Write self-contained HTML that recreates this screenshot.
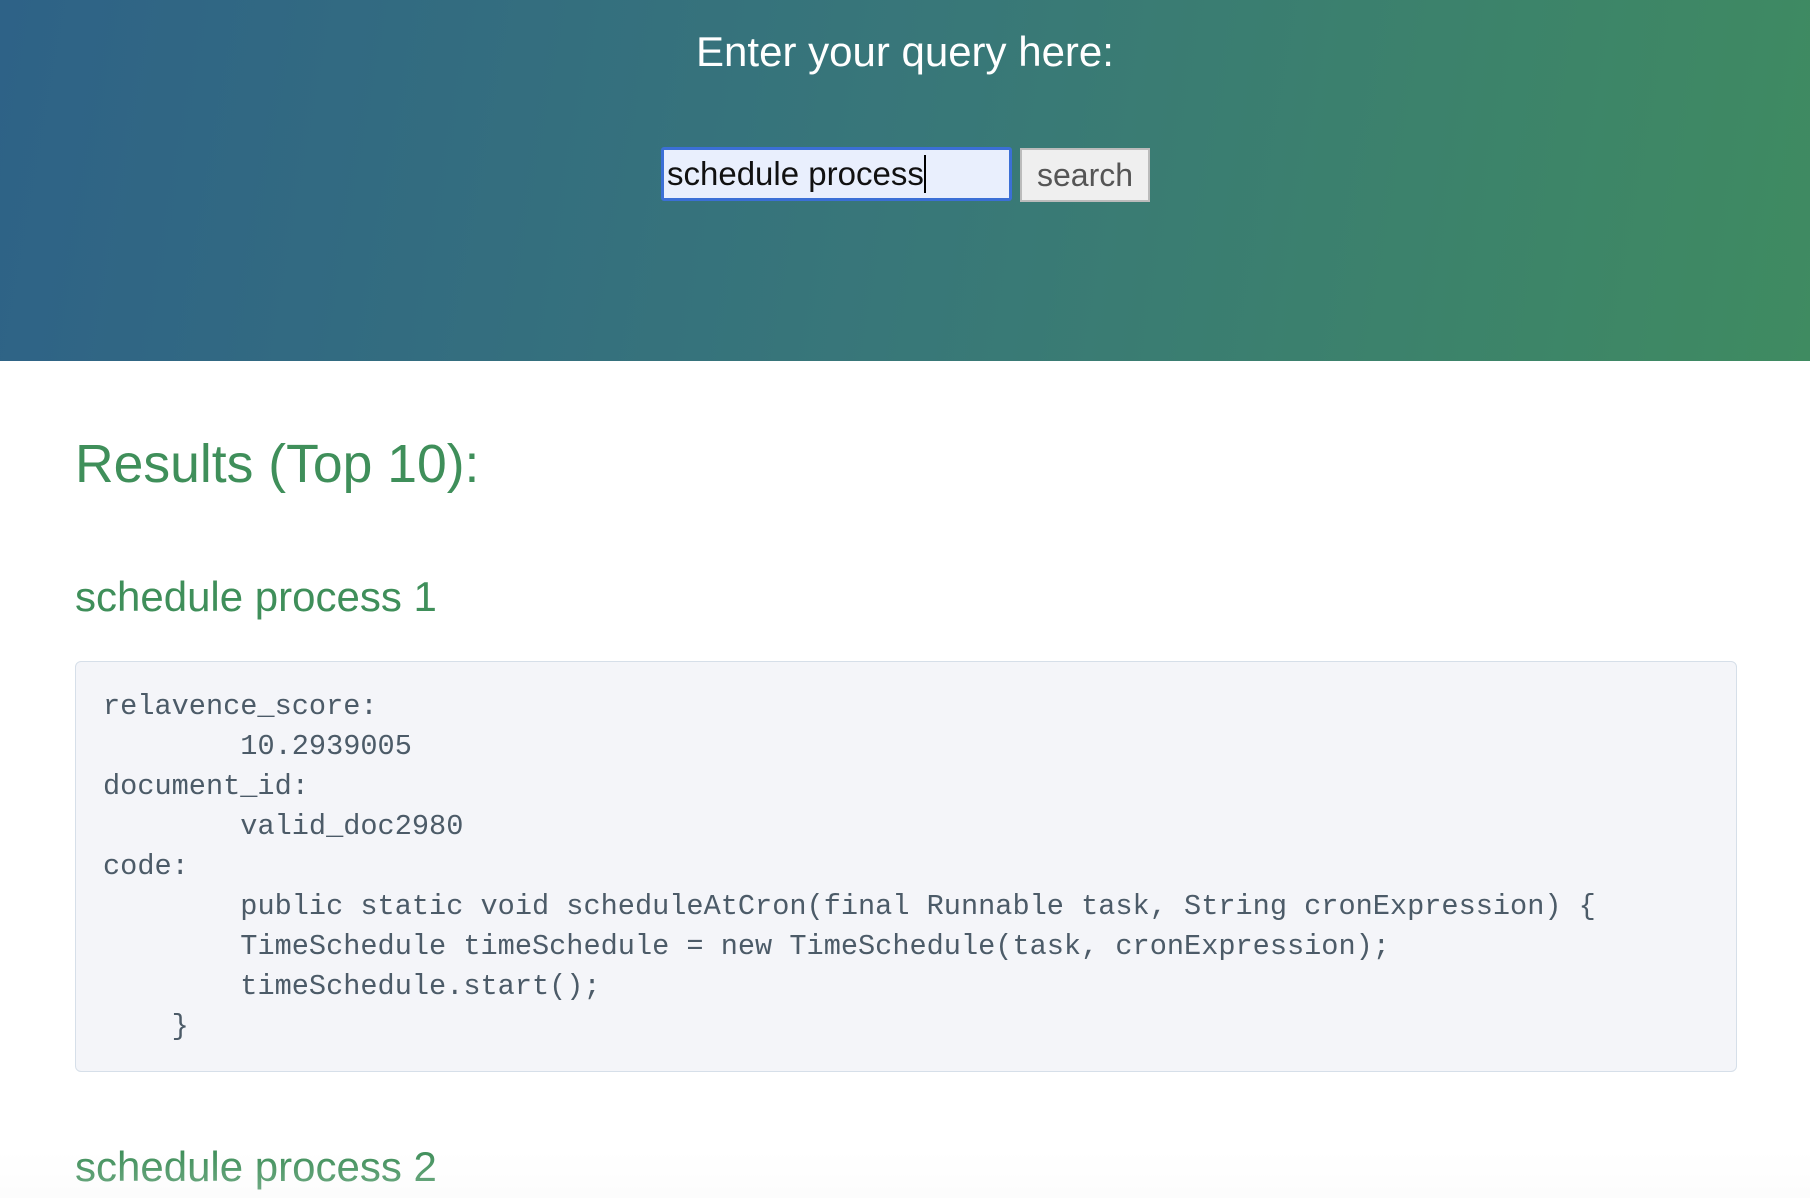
<!DOCTYPE html>
<html><head><meta charset="utf-8"><style>
html,body{margin:0;padding:0;width:1810px;height:1198px;overflow:hidden;background:#fff;font-family:"Liberation Sans",sans-serif}
.hdr{position:absolute;left:0;top:0;width:1810px;height:361px;background:linear-gradient(100deg,#2e6287 0%,#387779 50%,#3f8b61 100%)}
.t{position:absolute;top:28px;width:1810px;text-align:center;color:#fff;font-size:42px}
.inp{position:absolute;left:661px;top:147px;width:351px;height:54px;box-sizing:border-box;border:3px solid #3b6fd6;border-radius:3px;background:#e9effd;font-size:33px;line-height:48px;padding-left:3px;color:#111}
.inp span{display:inline-block;width:2px;height:38px;background:#000;vertical-align:-8px}
.btn{position:absolute;left:1020px;top:148px;width:130px;height:54px;box-sizing:border-box;border:2px solid #bbb;background:#efefef;color:#555;font-size:32px;text-align:center;line-height:50px}
h1{position:absolute;left:75px;top:434px;margin:0;font-weight:normal;color:#3f8f5a;font-size:53.5px}
h2{position:absolute;left:75px;margin:0;font-weight:normal;color:#3f8f5a;font-size:42px}
pre{position:absolute;left:75px;top:661px;width:1662px;height:411px;box-sizing:border-box;margin:0;border:1.5px solid #d6dfe9;border-radius:6px;background:#f4f5f9;color:#4c5b68;font-family:"Liberation Mono",monospace;font-size:28.6px;line-height:40px;padding:25px 0 0 27px;tab-size:8}
.fade{position:absolute;left:0;top:1150px;width:1810px;height:48px;background:linear-gradient(rgba(255,255,255,0),rgba(245,245,245,.3))}
</style></head><body>
<div class="hdr"></div>
<div class="t">Enter your query here:</div>
<div class="inp">schedule process<span></span></div>
<div class="btn">search</div>
<h1>Results (Top 10):</h1>
<h2 style="top:573px">schedule process 1</h2>
<pre>relavence_score:
	10.2939005
document_id:
	valid_doc2980
code:
	public static void scheduleAtCron(final Runnable task, String cronExpression) {
	TimeSchedule timeSchedule = new TimeSchedule(task, cronExpression);
	timeSchedule.start();
    }</pre>
<h2 style="top:1143px">schedule process 2</h2>
<div class="fade"></div>
</body></html>
